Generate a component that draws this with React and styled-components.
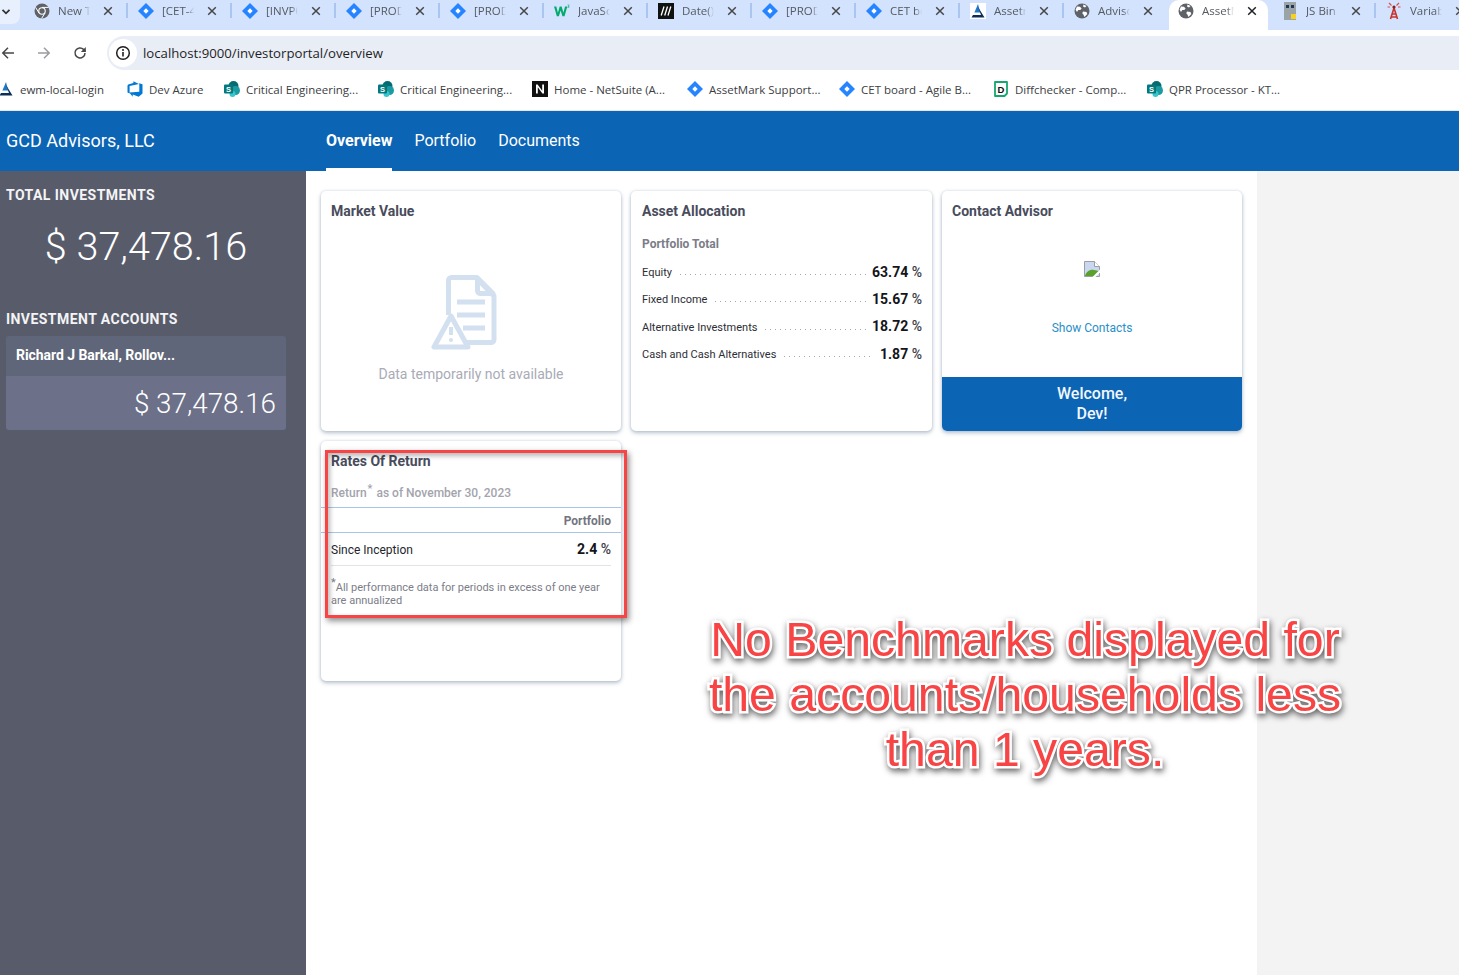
import React from "react";
import styled, { createGlobalStyle } from "styled-components";

const Global = createGlobalStyle`
  html, body { margin: 0; padding: 0; background: #fff; }
  body { font-family: Roboto, "Liberation Sans", sans-serif; }
  * { box-sizing: border-box; }
`;

const Page = styled.div`
  position: relative;
  width: 1459px;
  height: 975px;
  overflow: hidden;
  display: flex;
  flex-direction: column;
`;

/* ---------- browser chrome ---------- */
const TabStrip = styled.div`
  height: 30px;
  flex: none;
  background: #d3e3fd;
  display: flex;
  align-items: stretch;
  overflow: hidden;
`;
const ChevronBox = styled.div`
  width: 20px;
  height: 24px;
  flex: none;
  margin-right: 5px;
  padding-left: 1px;
  background: #e8f0fe;
  border-radius: 0 0 8px 0;
  display: flex;
  align-items: center;
  color: #333;
`;
const Tab = styled.div`
  position: relative;
  flex: none;
  width: ${(p) => (p.$active ? 99 : 104)}px;
  margin-right: ${(p) => (p.$active ? 5 : 0)}px;
  height: 30px;
  padding: 0 ${(p) => (p.$active ? 11 : 16)}px 9px 9px;
  display: flex;
  align-items: center;
  gap: 8px;
  background: ${(p) => (p.$active ? "#fff" : "transparent")};
  border-radius: ${(p) => (p.$active ? "10px 10px 0 0" : "0")};
  &::after {
    content: "";
    display: ${(p) => (p.$sep ? "block" : "none")};
    position: absolute;
    right: 1px;
    top: 3px;
    height: 15px;
    width: 2px;
    background: #aac6ee;
  }
`;
const TabIcon = styled.span`
  width: 16px;
  height: 16px;
  flex: none;
  display: flex;
  align-items: center;
  justify-content: center;
`;
const TabTitle = styled.span`
  flex: 1;
  min-width: 0;
  margin-right: 5px;
  overflow: hidden;
  white-space: nowrap;
  font: 11.5px "Open Sans", "Liberation Sans", sans-serif;
  color: #555a60;
  -webkit-mask-image: linear-gradient(90deg, #000 78%, transparent 100%);
  mask-image: linear-gradient(90deg, #000 78%, transparent 100%);
`;
const TabClose = styled.span`
  width: 10px;
  flex: none;
  display: flex;
  justify-content: center;
  color: ${(p) => (p.$active ? "#202124" : "#474747")};
`;

const Toolbar = styled.div`
  height: 40px;
  flex: none;
  background: #fff;
  display: flex;
  align-items: flex-end;
`;
const NavIcons = styled.div`
  width: 107px;
  height: 34px;
  flex: none;
  display: flex;
  align-items: center;
  gap: 18px;
  margin-left: -1px;
`;
const NavIcon = styled.span`
  width: 18px;
  display: flex;
  justify-content: center;
  color: ${(p) => (p.$off ? "#9a9c9f" : "#474747")};
`;
const Omnibox = styled.div`
  flex: 1;
  height: 34px;
  margin-left: 1px;
  padding: 0 0 1px 2px;
  background: #e9edf6;
  border-radius: 17px 0 0 17px;
  display: flex;
  align-items: center;
  font: 13.2px "Open Sans", "Liberation Sans", sans-serif;
  color: #1f1f1f;
`;
const InfoChip = styled.span`
  width: 28px;
  height: 28px;
  border-radius: 50%;
  background: #fff;
  display: flex;
  align-items: center;
  justify-content: center;
  margin-right: 6px;
`;

const Bookmarks = styled.div`
  height: 41px;
  flex: none;
  background: #fff;
  border-bottom: 1px solid #e4e6ea;
  display: flex;
  align-items: center;
  padding-bottom: 2px;
  margin-left: -2px;
`;
const Bookmark = styled.div`
  flex: none;
  width: ${(p) => p.$w}px;
  display: flex;
  align-items: center;
  gap: 6px;
  white-space: nowrap;
  font: 11.5px "Open Sans", "Liberation Sans", sans-serif;
  color: #3c4043;
`;

/* ---------- app ---------- */
const AppHeader = styled.header`
  height: 60px;
  flex: none;
  background: #0b64b4;
  color: #fff;
  display: flex;
  align-items: center;
`;
const Brand = styled.div`
  width: 326px;
  padding: 0 0 1px 6px;
  font-size: 18px;
  flex: none;
`;
const NavLink = styled.a`
  height: 60px;
  margin-right: 22px;
  padding-bottom: 2px;
  display: flex;
  align-items: center;
  font-size: 16px;
  font-weight: ${(p) => (p.$active ? 700 : 400)};
  color: #fff;
  position: relative;
  &::after {
    content: "";
    display: ${(p) => (p.$active ? "block" : "none")};
    position: absolute;
    left: 0;
    right: 0;
    bottom: 0;
    height: 3px;
    background: #fff;
  }
`;

const Body = styled.div`
  flex: 1;
  display: flex;
  min-height: 0;
`;
const Sidebar = styled.aside`
  width: 306px;
  flex: none;
  background: #585c6a;
  color: #fff;
  padding: 16px 20px 0 6px;
`;
const SideLabel = styled.div`
  font-size: 14px;
  line-height: 17px;
  font-weight: 700;
  letter-spacing: 0.45px;
  color: #f4f4f6;
`;
const TotalValue = styled.div`
  font-size: 39.6px;
  font-weight: 300;
  line-height: 50px;
  margin: 18px 0 39px;
  text-align: center;
`;
const Account = styled.div`
  width: 280px;
  margin-top: 8px;
  border-radius: 3px;
  overflow: hidden;
`;
const AccountName = styled.div`
  height: 40px;
  background: #606679;
  display: flex;
  align-items: center;
  padding: 0 0 2px 10px;
  font-size: 14px;
  font-weight: 700;
  letter-spacing: -0.05px;
`;
const AccountValue = styled.div`
  height: 54px;
  background: #6c7189;
  display: flex;
  align-items: center;
  justify-content: flex-end;
  padding-right: 10px;
  font-size: 27.8px;
  font-weight: 300;
`;

const Main = styled.main`
  width: 951px;
  flex: none;
  background: #fff;
  padding: 20px 0 0 15px;
  display: grid;
  grid-template-columns: 300px 301px 300px;
  grid-auto-rows: 240px;
  column-gap: 10px;
  row-gap: 10px;
  align-content: start;
`;
const Gutter = styled.div`
  flex: 1;
  background: #f3f3f3;
`;
const Card = styled.section`
  --pad: ${(p) => p.$pad || 10}px;
  position: relative;
  background: #fff;
  border-radius: 5px;
  box-shadow: 0 2px 4px rgba(60, 90, 120, 0.35), 0 0 3px rgba(60, 90, 120, 0.18);
  overflow: hidden;
  display: flex;
  flex-direction: column;
`;
const CardTitle = styled.h2`
  margin: 0;
  padding: 12px var(--pad) 0;
  font-size: 14px;
  line-height: 16px;
  font-weight: 700;
  color: #484c5c;
`;
const EmptyState = styled.div`
  flex: 1;
  display: flex;
  flex-direction: column;
  align-items: center;
  padding-top: 56px;
  font-size: 14px;
  color: #a9abb6;
`;
const EmptyIcon = styled.div`
  width: 66px;
  height: 75px;
  margin-right: 14px;
`;
const EmptyText = styled.div`
  margin-top: 16px;
  line-height: 17px;
`;
const SubTitle = styled.div`
  padding: 17px var(--pad) 0;
  font-size: 12px;
  line-height: 16px;
  font-weight: 700;
  color: #7b7d88;
`;
const AllocList = styled.div`
  padding: 7px 10px 0 var(--pad);
`;
const AllocRow = styled.div`
  height: 27.3px;
  display: flex;
  align-items: center;
  font-size: 11px;
  color: #2c2e36;
`;
const Leader = styled.span`
  flex: 1;
  min-width: 0;
  height: 3px;
  margin: 4px 6px 0;
  background-image: radial-gradient(circle, #a5a7ae 0.6px, transparent 0.8px);
  background-size: 5px 3px;
  background-repeat: repeat-x;
`;
const Percent = styled.span`
  flex: none;
  margin-bottom: 2px;
  font-size: 14px;
  font-weight: 700;
  color: #14151a;
  small {
    font-size: 14px;
    font-weight: 500;
    color: #3b3d47;
  }
`;
const ContactBody = styled.div`
  flex: 1;
  display: flex;
  flex-direction: column;
  align-items: center;
`;
const ContactLink = styled.a`
  margin-top: 44px;
  font-size: 12px;
  color: #2a8fc7;
`;
const BrokenSlot = styled.div`
  margin-top: 42px;
  height: 16px;
`;
const Welcome = styled.div`
  height: 54px;
  flex: none;
  background: #0b64b4;
  color: #f2f7fc;
  text-align: center;
  font-size: 16px;
  font-weight: 500;
  line-height: 20px;
  padding-top: 7px;
`;
const ReturnMeta = styled.div`
  padding: 16px 10px 0;
  font-size: 12px;
  line-height: 16px;
  font-weight: 500;
  color: #a3a4ad;
  height: 38px;
  sup {
    font-size: 11px;
    line-height: 0;
    margin: 0 1px 0 1px;
  }
`;
const ReturnHead = styled.div`
  height: 26px;
  padding: 1px 10px 0 0;
  border-top: 1px solid #a9c6e3;
  border-bottom: 1px solid #a9c6e3;
  display: flex;
  align-items: center;
  justify-content: flex-end;
  font-size: 12px;
  font-weight: 700;
  color: #73757f;
`;
const ReturnRow = styled.div`
  margin: 0 10px;
  height: 33px;
  padding-top: 2px;
  border-bottom: 1px solid #e2e3e6;
  display: flex;
  align-items: center;
  justify-content: space-between;
  font-size: 12px;
  color: #24252c;
`;
const Footnote = styled.div`
  padding: 15px 10px 0;
  font-size: 11px;
  line-height: 13px;
  color: #7b7d88;
  sup {
    font-size: 11px;
    line-height: 0;
  }
`;

/* ---------- annotation over the page ---------- */
const RedBox = styled.div`
  position: absolute;
  left: 325px;
  top: 450px;
  width: 302px;
  height: 168px;
  border: 3px solid #f84444;
  box-shadow: 2px 3px 6px rgba(0, 0, 0, 0.45), inset 2px 3px 5px rgba(0, 0, 0, 0.28);
`;
const Annotation = styled.div`
  position: absolute;
  left: 665px;
  top: 612px;
  width: 720px;
  text-align: center;
  font: 400 48.2px/54.8px "Liberation Sans", Arial, sans-serif;
  color: #f84444;
  -webkit-text-stroke: 5px #fff;
  paint-order: stroke fill;
  filter: drop-shadow(1px 3px 3px rgba(0, 0, 0, 0.6));
`;

/* ---------- drawn icons ---------- */
const Jira = () => (
  <svg width="16" height="16" viewBox="0 0 16 16">
    <path d="M8 0l8 8-8 8-8-8z" fill="#2684ff" />
    <path d="M8 5.300L10.700 8 8 10.700 5.300 8z" fill="#fff" />
  </svg>
);
const ChromeLogo = () => (
  <svg width="16" height="16" viewBox="0 0 16 16">
    <circle cx="8" cy="8" r="7.500" fill="#5f6368" />
    <circle cx="8" cy="8" r="3.800" fill="#fff" />
    <circle cx="8" cy="8" r="2.700" fill="#5f6368" />
    <path d="M8 4.400h6.600M5 10l-3.400-5.600M11 10l-3.400 5.400" stroke="#fff" strokeWidth="1" />
  </svg>
);
const Globe = () => (
  <svg width="16" height="16" viewBox="0 0 16 16">
    <circle cx="8" cy="8" r="7.500" fill="#5f6368" />
    <path d="M3 3.500l3 .2 1.600 1.800-1.300 1.400-2 .1-1.300 2-1.400-2.200zM9.500 1.500l3 1.400-1.500 1.500-2-.8zM9 8.500l3.500.5.8 2-2.800 3-1-2.200-1.200-1.600z" fill="#fff" />
  </svg>
);
const WThree = () => (
  <svg width="18" height="16" viewBox="0 0 18 16">
    <path d="M0 3h2.600l1.800 7 2-7h2.200l2 7 1.800-7H15l-3.200 11H9.500l-2-6.600-2 6.600H3.200z" fill="#04aa6d" />
    <path d="M15.200 1h2.400l-1 1.400c.7.2.9.7.8 1.200-.2.9-1.500 1-2.300.5l.3-.6c.5.3 1 .2 1.100-.1.1-.3-.3-.5-.8-.4l.7-1.400h-1.200z" fill="#04aa6d" />
  </svg>
);
const Mdn = () => (
  <svg width="16" height="16" viewBox="0 0 16 16">
    <rect width="16" height="16" fill="#111" />
    <path d="M3.200 12.500L6 3.500M6.700 12.500L9.500 3.500M10 12.500L12.800 3.500" stroke="#fff" strokeWidth="1.300" />
  </svg>
);
const Assetmark = () => (
  <svg width="16" height="16" viewBox="0 0 16 16">
    <rect width="16" height="16" fill="#fff" />
    <path d="M8 1l2.200 8.600H4.400z" fill="#1f78c8" />
    <path d="M8 4l6.500 10.500H1.500L3 12h8z" fill="#0c2d57" />
  </svg>
);
const JsBin = () => (
  <svg width="14" height="18" viewBox="0 0 14 18">
    <rect x="1" y="0" width="12" height="18" fill="#9aa3a8" />
    <rect x="3" y="3" width="3" height="3" fill="#1f3550" />
    <rect x="8" y="3" width="3" height="3" fill="#1f3550" />
    <rect x="8" y="12" width="5" height="5" fill="#f6d21f" />
  </svg>
);
const Variable = () => (
  <svg width="16" height="18" viewBox="0 0 16 18">
    <path d="M8 6L4.500 17M8 6l3.500 11M6 12h4M5 15h6" stroke="#c9302c" strokeWidth="1.600" fill="none" />
    <circle cx="8" cy="5" r="1.600" fill="#8a1f1f" />
    <path d="M3 1l2.500 2.500M13 1l-2.500 2.500M1.500 5H4M14.500 5H12" stroke="#e24b4b" strokeWidth="1.200" />
  </svg>
);
const SharePoint = () => (
  <svg width="16" height="16" viewBox="0 0 16 16">
    <circle cx="9.500" cy="5" r="5" fill="#036c70" />
    <circle cx="11.500" cy="9.500" r="4.500" fill="#1a9ba1" />
    <circle cx="8.500" cy="13" r="3" fill="#37c6d0" />
    <rect x="0" y="3.500" width="9" height="9" rx="1" fill="#03787c" />
    <text x="4.500" y="11" textAnchor="middle" fontSize="7.500" fontWeight="700" fill="#fff" fontFamily="Liberation Sans">S</text>
  </svg>
);
const AzureDevops = () => (
  <svg width="16" height="16" viewBox="0 0 16 16">
    <path d="M15.500 3.200v9.400l-3.800 3.200-6-2.200v2.200L2.300 11.500l10-.8V2.200zM12 3L6.400.2V2L1.200 3.500.5 4.600v6.900l2.100.9V5.100z" fill="#0078d4" />
  </svg>
);
const Notion = () => (
  <svg width="16" height="16" viewBox="0 0 16 16">
    <rect width="16" height="16" fill="#111" />
    <path d="M4 12.500v-9h1.600l4.600 6.200V3.500h1.800v9h-1.600L5.800 6.300v6.200z" fill="#fff" />
  </svg>
);
const Diffchecker = () => (
  <svg width="16" height="16" viewBox="0 0 16 16">
    <path d="M2 1h12v11.500L11.500 15H2z" fill="#fff" stroke="#16a66f" strokeWidth="1.800" strokeLinejoin="round" />
    <text x="8" y="11.500" textAnchor="middle" fontSize="9.500" fontWeight="700" fill="#111" fontFamily="Liberation Sans">D</text>
  </svg>
);
const X = () => (
  <svg width="10" height="10" viewBox="0 0 10 10">
    <path d="M1.200 1.200l7.600 7.600M8.800 1.200L1.200 8.800" stroke="currentColor" strokeWidth="1.500" />
  </svg>
);
const Back = () => (
  <svg width="14" height="14" viewBox="0 0 14 14">
    <path d="M13 7H2M7 1.800L1.800 7 7 12.200" fill="none" stroke="currentColor" strokeWidth="1.500" />
  </svg>
);
const Forward = () => (
  <svg width="14" height="14" viewBox="0 0 14 14">
    <path d="M1 7h11M7 1.800L12.200 7 7 12.200" fill="none" stroke="currentColor" strokeWidth="1.500" />
  </svg>
);
const Reload = () => (
  <svg width="14" height="14" viewBox="0 0 14 14">
    <path d="M12 7a5 5 0 1 1-1.500-3.600L12.500 5.500" fill="none" stroke="currentColor" strokeWidth="1.500" />
    <path d="M12.800 1v5h-5z" fill="currentColor" />
  </svg>
);
const Chevron = () => (
  <svg width="10" height="8" viewBox="0 0 10 8">
    <path d="M1.500 1.800L5 5.300l3.500-3.500" fill="none" stroke="currentColor" strokeWidth="1.800" />
  </svg>
);
const Info = () => (
  <svg width="16" height="16" viewBox="0 0 16 16">
    <circle cx="8" cy="8" r="6.300" fill="none" stroke="#1f1f1f" strokeWidth="1.500" />
    <path d="M8 7v4.400" stroke="#1f1f1f" strokeWidth="1.600" />
    <circle cx="8" cy="5" r="1" fill="#1f1f1f" />
  </svg>
);
const NoData = () => (
  <svg width="66" height="75" viewBox="0 0 66 75">
    <path
      d="M17.500 40V5.500a3 3 0 0 1 3-3H45L63 21v43.500a3 3 0 0 1-3 3H36"
      fill="none"
      stroke="#d2e0f0"
      strokeWidth="5"
      strokeLinejoin="round"
    />
    <path d="M46.500 3v12.500a3 3 0 0 0 3 3H62z" fill="none" stroke="#d2e0f0" strokeWidth="5" strokeLinejoin="round" />
    <path d="M26 27h28M26 40h28M32 53h22" stroke="#d2e0f0" strokeWidth="5" />
    <path d="M20 41L3 72h34z" fill="#fff" stroke="#d2e0f0" strokeWidth="5" strokeLinejoin="round" />
    <path d="M20 52v8" stroke="#d2e0f0" strokeWidth="4" />
    <circle cx="20" cy="65" r="2" fill="#d2e0f0" />
  </svg>
);
const BrokenImage = () => (
  <svg width="16" height="16" viewBox="0 0 16 16">
    <path d="M.5.500h10l5 5v10H.5z" fill="#c9d7f1" stroke="#9e9e9e" />
    <path d="M10.500.5v5h5" fill="#fff" stroke="#9e9e9e" />
    <path d="M1 15c1-4 5-7 9-6l5 1-3 5z" fill="#5aa02c" />
    <path d="M16 8.500L8.500 16h3L16 11.500z" fill="#fff" />
  </svg>
);

const tabs = [
  { icon: <ChromeLogo />, title: "New Tab", sep: true },
  { icon: <Jira />, title: "[CET-4521]", sep: true },
  { icon: <Jira />, title: "[INVP0-12]", sep: true },
  { icon: <Jira />, title: "[PROD-118]", sep: true },
  { icon: <Jira />, title: "[PROD-204]", sep: true },
  { icon: <WThree />, title: "JavaScript", sep: true },
  { icon: <Mdn />, title: "Date()", sep: true },
  { icon: <Jira />, title: "[PROD-377]", sep: true },
  { icon: <Jira />, title: "CET board", sep: true },
  { icon: <Assetmark />, title: "Assetmark", sep: true },
  { icon: <Globe />, title: "Advisor", sep: false },
  { icon: <Globe />, title: "AssetMark", active: true },
  { icon: <JsBin />, title: "JS Bin", sep: true },
  { icon: <Variable />, title: "Variable" },
];

const bookmarks = [
  { icon: <Assetmark />, label: "ewm-local-login", w: 129 },
  { icon: <AzureDevops />, label: "Dev Azure", w: 97 },
  { icon: <SharePoint />, label: "Critical Engineering...", w: 154 },
  { icon: <SharePoint />, label: "Critical Engineering...", w: 154 },
  { icon: <Notion />, label: "Home - NetSuite (A...", w: 155 },
  { icon: <Jira />, label: "AssetMark Support...", w: 152 },
  { icon: <Jira />, label: "CET board - Agile B...", w: 154 },
  { icon: <Diffchecker />, label: "Diffchecker - Comp...", w: 154 },
  { icon: <SharePoint />, label: "QPR Processor - KT...", w: 160 },
];

const allocation = [
  ["Equity", "63.74"],
  ["Fixed Income", "15.67"],
  ["Alternative Investments", "18.72"],
  ["Cash and Cash Alternatives", "1.87"],
];

export default function App() {
  return (
    <Page>
      <Global />
      <TabStrip>
        <ChevronBox>
          <Chevron />
        </ChevronBox>
        {tabs.map((t, i) => (
          <Tab key={i} $active={t.active} $sep={t.sep}>
            <TabIcon>{t.icon}</TabIcon>
            <TabTitle>{t.title}</TabTitle>
            <TabClose $active={t.active}>
              <X />
            </TabClose>
          </Tab>
        ))}
      </TabStrip>
      <Toolbar>
        <NavIcons>
          <NavIcon>
            <Back />
          </NavIcon>
          <NavIcon $off>
            <Forward />
          </NavIcon>
          <NavIcon>
            <Reload />
          </NavIcon>
        </NavIcons>
        <Omnibox>
          <InfoChip>
            <Info />
          </InfoChip>
          localhost:9000/investorportal/overview
        </Omnibox>
      </Toolbar>
      <Bookmarks>
        {bookmarks.map((b, i) => (
          <Bookmark key={i} $w={b.w}>
            {b.icon}
            {b.label}
          </Bookmark>
        ))}
      </Bookmarks>
      <AppHeader>
        <Brand>GCD Advisors, LLC</Brand>
        <NavLink $active>Overview</NavLink>
        <NavLink>Portfolio</NavLink>
        <NavLink>Documents</NavLink>
      </AppHeader>
      <Body>
        <Sidebar>
          <SideLabel>TOTAL INVESTMENTS</SideLabel>
          <TotalValue>$ 37,478.16</TotalValue>
          <SideLabel>INVESTMENT ACCOUNTS</SideLabel>
          <Account>
            <AccountName>Richard J Barkal, Rollov...</AccountName>
            <AccountValue>$ 37,478.16</AccountValue>
          </Account>
        </Sidebar>
        <Main>
          <Card>
            <CardTitle>Market Value</CardTitle>
            <EmptyState>
              <EmptyIcon>
                <NoData />
              </EmptyIcon>
              <EmptyText>Data temporarily not available</EmptyText>
            </EmptyState>
          </Card>
          <Card $pad={11}>
            <CardTitle>Asset Allocation</CardTitle>
            <SubTitle>Portfolio Total</SubTitle>
            <AllocList>
              {allocation.map(([name, value]) => (
                <AllocRow key={name}>
                  {name}
                  <Leader />
                  <Percent>
                    {value} <small>%</small>
                  </Percent>
                </AllocRow>
              ))}
            </AllocList>
          </Card>
          <Card>
            <CardTitle>Contact Advisor</CardTitle>
            <ContactBody>
              <BrokenSlot>
                <BrokenImage />
              </BrokenSlot>
              <ContactLink>Show Contacts</ContactLink>
            </ContactBody>
            <Welcome>
              Welcome,
              <br />
              Dev!
            </Welcome>
          </Card>
          <Card>
            <CardTitle>Rates Of Return</CardTitle>
            <ReturnMeta>
              Return<sup>*</sup> as of November 30, 2023
            </ReturnMeta>
            <ReturnHead>Portfolio</ReturnHead>
            <ReturnRow>
              Since Inception
              <Percent>
                2.4 <small>%</small>
              </Percent>
            </ReturnRow>
            <Footnote>
              <sup>*</sup>All performance data for periods in excess of one year are annualized
            </Footnote>
          </Card>
        </Main>
        <Gutter />
      </Body>
      <RedBox />
      <Annotation>
        No Benchmarks displayed for
        <br />
        the accounts/households less
        <br />
        than 1 years.
      </Annotation>
    </Page>
  );
}
